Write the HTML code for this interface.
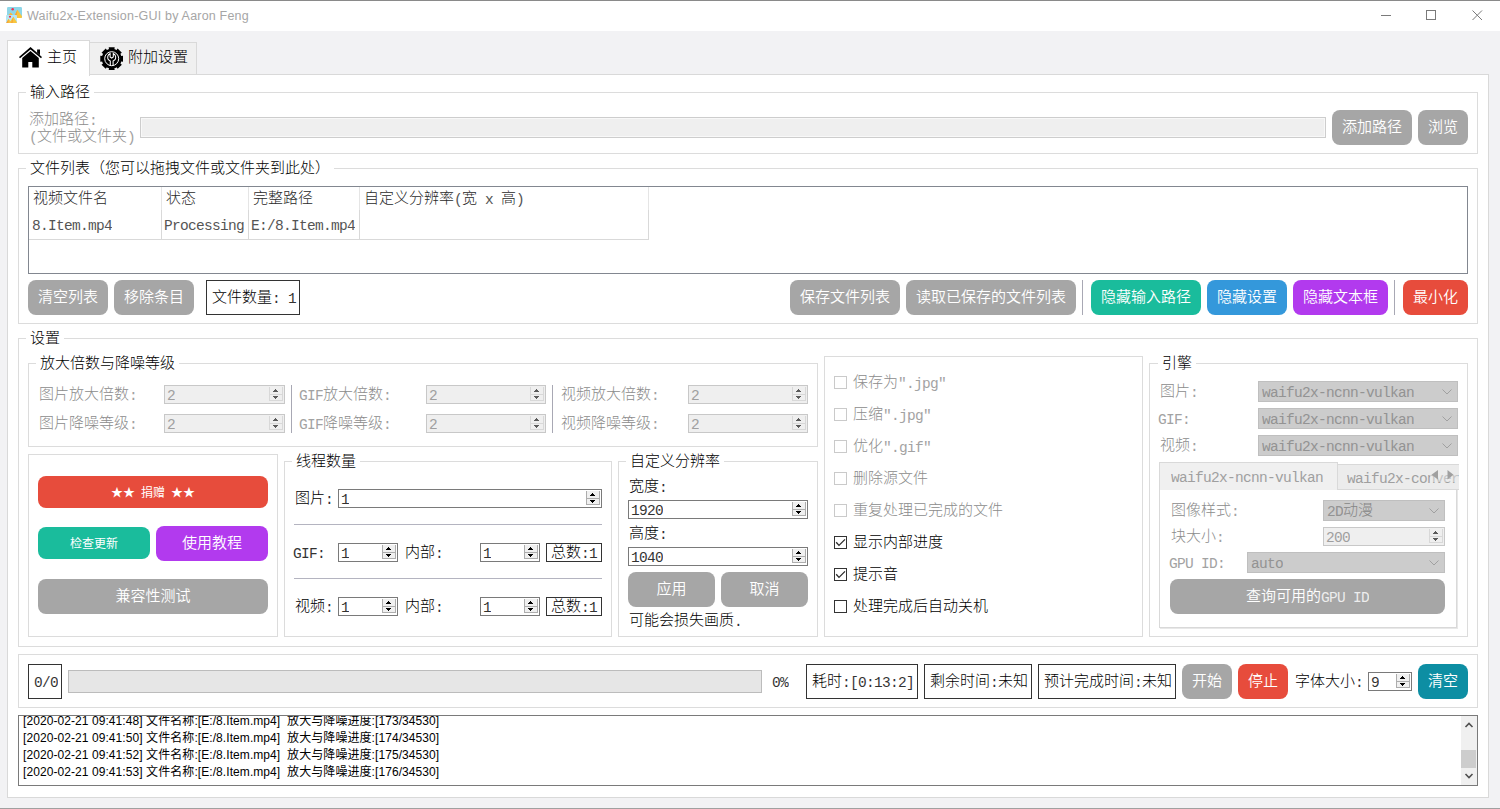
<!DOCTYPE html>
<html lang="zh-CN"><head><meta charset="utf-8"><title>Waifu2x-Extension-GUI by Aaron Feng</title>
<style>
*{box-sizing:border-box;margin:0;padding:0}
html,body{width:1500px;height:809px;overflow:hidden;background:#f2f2f4}
body{position:relative;font-family:"Liberation Sans","Noto Sans CJK SC",sans-serif;font-weight:300;font-size:15px;color:#000}
body>div,body>svg{position:absolute}
.l{font-family:"Liberation Mono","Noto Sans CJK SC",monospace;font-weight:400;font-size:14.5px;letter-spacing:-0.7015px;white-space:pre;opacity:.8;position:relative;top:1px}
.t{white-space:nowrap;line-height:15px;height:15px}
.g{color:#8c8c8c}
.d3{color:#2a2a2a}
.w{color:#fff}
.gb{border:1px solid #dcdcdc;background:#fff}
.gt{background:#fff;height:16px;line-height:15px;padding-left:4px;white-space:nowrap}
.btn{border-radius:8px;color:#fff;text-align:center;white-space:nowrap;font-weight:350}
.s12{font-size:12px;font-weight:400}
.s12 .l{font-size:12px;letter-spacing:-1.2px}
.sp{border:1px solid #7a7a7a;background:#fff}
.sp .sv{position:absolute;left:2px;top:0px;line-height:15px}
.sp .sb{position:absolute;right:1px;top:1px;width:14px;bottom:2px;background:#f0f0f0;border:1px solid #adadad;border-top:none}
.sp .sb:after{content:"";position:absolute;left:0;right:0;top:7px;height:1px;background:#adadad}
.sp i{position:absolute;left:3px;width:5px;height:3px;color:#000}
.sp i.up{top:2px;background:linear-gradient(currentColor,currentColor) 2px 0/1px 1px no-repeat,linear-gradient(currentColor,currentColor) 1px 1px/3px 1px no-repeat,linear-gradient(currentColor,currentColor) 0 2px/5px 1px no-repeat}
.sp i.dn{bottom:1px;background:linear-gradient(currentColor,currentColor) 2px 2px/1px 1px no-repeat,linear-gradient(currentColor,currentColor) 1px 1px/3px 1px no-repeat,linear-gradient(currentColor,currentColor) 0 0/5px 1px no-repeat}
.sp.dis{border-color:#c8c8c8;background:#efefef;color:#8c8c8c}
.sp.dis .sb{background:#efefef;border-color:#d8d8d8}
.sp.dis .sb:after{background:#d8d8d8}
.sp.dis i{color:#5a5a5a}
.cb{border:1px solid #bfbfbf;background:#cccccc;color:#858585}
.cb .cv{position:absolute;left:3px;top:1px;line-height:15px;white-space:nowrap}
.cb .chev{position:absolute;right:5px;top:7px}
.lb{border:1px solid #333;background:#fff}
.ck{width:13px;height:13px;border:1px solid #333;background:#fff}
.ck.dis{border-color:#cacaca}
.vl{background:#a8a8b4;width:1px}
.hl{background:#b4b4c0;height:1px}
.log{font-family:"Liberation Sans","Noto Sans CJK SC",sans-serif;font-weight:400;font-size:12px;line-height:17px;white-space:pre;color:#000;letter-spacing:0.075px}
</style></head><body>

<div class="" style="left:0px;top:0px;width:1500px;height:1px;background:#8a8a8a"></div>
<div class="" style="left:0px;top:1px;width:1500px;height:30px;background:#fff"></div>
<svg style="left:6px;top:6px" width="17" height="18" viewBox="0 0 17 18">
<rect x="1" y="1" width="15" height="11" rx="1.2" fill="#8dd6e8"/>
<path d="M7.5 12 L11.4 3.8 L16 10.2 V11 Q16 12 15 12 Z" fill="#f8c63e"/>
<path d="M7.5 12 L11.4 3.8 L10.6 12 Z" fill="#f5a33a"/>
<path d="M2.6 9 L4.7 6.4 L7 9 Z" fill="#f8b83c"/>
<circle cx="6.7" cy="3.2" r="1.25" fill="#f0304e"/>
<rect x="0" y="9" width="11" height="8" rx="0.8" fill="#b6e6f3"/>
<path d="M0.3 17 L2.6 12.8 L4.4 15.2 L7.3 10.8 L10.8 16 V17 Z" fill="#f8c63e"/>
<path d="M0.3 17 L2.6 12.8 L2.4 17 Z M5 17 L7.3 10.8 L6.6 17 Z" fill="#f5a33a"/>
<circle cx="4" cy="10.8" r="1.05" fill="#f0304e"/>
</svg>
<div style="left:27px;top:8px;font-family:'Liberation Sans',sans-serif;font-size:12.5px;line-height:16px;color:#a6a6a6;font-weight:400;white-space:nowrap;letter-spacing:0.2px">Waifu2x-Extension-GUI by Aaron Feng</div>
<svg style="left:1375px;top:5px" width="115" height="22" viewBox="0 0 115 22">
<path d="M6 10.5 H16" stroke="#7a7a7a" stroke-width="1"/>
<rect x="51.5" y="5.5" width="9" height="9" fill="none" stroke="#7a7a7a" stroke-width="1"/>
<path d="M97.5 5.5 L107 15 M107 5.5 L97.5 15" stroke="#7a7a7a" stroke-width="1"/>
</svg>
<div class="" style="left:7px;top:74px;width:1482px;height:724px;background:#fff;border:1px solid #d9d9d9"></div>
<div class="" style="left:89px;top:42px;width:108px;height:33px;background:#f0f0f0;border:1px solid #d9d9d9"></div>
<div class="" style="left:7px;top:40px;width:83px;height:36px;background:#fff;border:1px solid #d9d9d9;border-bottom:none"></div>
<svg style="left:19px;top:47px" width="23" height="21" viewBox="0 0 23 21">
<path d="M11.5 0.1 L0 9.9 L1 11.2 L11.5 2.5 L22 11.2 L23 9.9 Z" fill="#000"/>
<path d="M18.1 2.5 H21 V8.2 L18.1 5.7 Z" fill="#000"/>
<path d="M11.5 3.9 L3.2 10.9 V20.6 H9.3 V15 H13.3 V20.6 H19.8 V10.9 Z" fill="#000"/>
</svg>
<div class="t " style="left:47px;top:49px;">主页</div>
<svg style="left:99.8px;top:46.8px" width="23.4" height="23.4" viewBox="0 0 23.4 23.4">
<path d="M9.00 2.49 L8.72 0.28 L14.68 0.28 L14.40 2.49 L16.31 3.28 L17.67 1.52 L21.88 5.73 L20.12 7.09 L20.91 9.00 L23.12 8.72 L23.12 14.68 L20.91 14.40 L20.12 16.31 L21.88 17.67 L17.67 21.88 L16.31 20.12 L14.40 20.91 L14.68 23.12 L8.72 23.12 L9.00 20.91 L7.09 20.12 L5.73 21.88 L1.52 17.67 L3.28 16.31 L2.49 14.40 L0.28 14.68 L0.28 8.72 L2.49 9.00 L3.28 7.09 L1.52 5.73 L5.73 1.52 L7.09 3.28 Z" fill="#000"/>
<circle cx="11.7" cy="11.7" r="9.9" fill="#000"/>
<circle cx="11.7" cy="11.7" r="7" fill="none" stroke="#fff" stroke-width="1"/>
<path d="M10.3 18.4 V14 C8.4 13.2 7.4 11.4 7.8 9.4 C8.1 8 9 7 10.1 6.6 V9.9 L11.7 11.1 L13.3 9.9 V6.6 C14.4 7 15.3 8 15.6 9.4 C16 11.4 15 13.2 13.1 14 V18.4" fill="none" stroke="#fff" stroke-width="1.05"/>
</svg>
<div class="t " style="left:128px;top:49px;">附加设置</div>
<div class="gb" style="left:18px;top:92px;width:1460px;height:62px;"></div>
<div class="gt" style="left:26px;top:84px;width:68px">输入路径</div>
<div class="t g" style="left:29px;top:111px;">添加路径<span class="l">:</span></div>
<div class="t g" style="left:29px;top:128px;"><span class="l">(</span>文件或文件夹<span class="l">)</span></div>
<div class="" style="left:140px;top:117px;width:1186px;height:21px;background:#efefef;border:1px solid #cdcdcd;box-shadow:inset 0 0 0 1px #f8f8f8"></div>
<div class="btn " style="left:1332px;top:110px;width:80px;height:35px;line-height:33px;background:#a6a6a6;">添加路径</div>
<div class="btn " style="left:1418px;top:110px;width:50px;height:35px;line-height:33px;background:#a6a6a6;">浏览</div>
<div class="gb" style="left:18px;top:168px;width:1460px;height:156px;"></div>
<div class="gt" style="left:26px;top:160px;width:308px">文件列表（您可以拖拽文件或文件夹到此处）</div>
<div class="" style="left:28px;top:186px;width:1440px;height:88px;background:#fff;border:1px solid #828790"></div>
<div class="" style="left:161px;top:187px;width:1px;height:23px;background:#e5e5e5"></div>
<div class="" style="left:161px;top:210px;width:1px;height:30px;background:#d9d9d9"></div>
<div class="" style="left:248px;top:187px;width:1px;height:23px;background:#e5e5e5"></div>
<div class="" style="left:248px;top:210px;width:1px;height:30px;background:#d9d9d9"></div>
<div class="" style="left:359px;top:187px;width:1px;height:23px;background:#e5e5e5"></div>
<div class="" style="left:359px;top:210px;width:1px;height:30px;background:#d9d9d9"></div>
<div class="" style="left:648px;top:187px;width:1px;height:23px;background:#e5e5e5"></div>
<div class="" style="left:648px;top:210px;width:1px;height:30px;background:#d9d9d9"></div>
<div class="" style="left:29px;top:239px;width:620px;height:1px;background:#d9d9d9"></div>
<div class="t d3" style="left:33px;top:190px;">视频文件名</div>
<div class="t d3" style="left:166px;top:190px;">状态</div>
<div class="t d3" style="left:253px;top:190px;">完整路径</div>
<div class="t d3" style="left:364px;top:190px;">自定义分辨率<span class="l">(</span>宽<span class="l"> x </span>高<span class="l">)</span></div>
<div class="t d3" style="left:32px;top:216px;"><span class="l">8.Item.mp4</span></div>
<div class="t d3" style="left:164px;top:216px;"><span class="l">Processing</span></div>
<div class="t d3" style="left:251px;top:216px;"><span class="l">E:/8.Item.mp4</span></div>
<div class="btn " style="left:28px;top:280px;width:80px;height:35px;line-height:33px;background:#a6a6a6;">清空列表</div>
<div class="btn " style="left:114px;top:280px;width:80px;height:35px;line-height:33px;background:#a6a6a6;">移除条目</div>
<div class="lb" style="left:206px;top:280px;width:94px;height:35px;"></div>
<div class="t " style="left:212px;top:289px;">文件数量<span class="l">: 1</span></div>
<div class="btn " style="left:790px;top:280px;width:110px;height:35px;line-height:33px;background:#a6a6a6;">保存文件列表</div>
<div class="btn " style="left:906px;top:280px;width:170px;height:35px;line-height:33px;background:#a6a6a6;">读取已保存的文件列表</div>
<div class="vl" style="left:1082px;top:280px;width:1px;height:35px;"></div>
<div class="btn " style="left:1091px;top:280px;width:110px;height:35px;line-height:33px;background:#1abc9c;">隐藏输入路径</div>
<div class="btn " style="left:1207px;top:280px;width:80px;height:35px;line-height:33px;background:#3498db;">隐藏设置</div>
<div class="btn " style="left:1293px;top:280px;width:95px;height:35px;line-height:33px;background:#b23aee;">隐藏文本框</div>
<div class="vl" style="left:1394px;top:280px;width:1px;height:35px;"></div>
<div class="btn " style="left:1403px;top:280px;width:65px;height:35px;line-height:33px;background:#e74c3c;">最小化</div>
<div class="gb" style="left:18px;top:338px;width:1460px;height:309px;"></div>
<div class="gt" style="left:26px;top:330px;width:38px">设置</div>
<div class="gb" style="left:28px;top:363px;width:790px;height:84px;"></div>
<div class="gt" style="left:36px;top:355px;width:143px">放大倍数与降噪等级</div>
<div class="t g" style="left:39px;top:386px;">图片放大倍数<span class="l">:</span></div>
<div class="t g" style="left:39px;top:415px;">图片降噪等级<span class="l">:</span></div>
<div class="sp dis" style="left:164px;top:385px;width:121px;height:19px"><span class="sv"><span class="l">2</span></span><span class="sb"><i class="up"></i><i class="dn"></i></span></div>
<div class="sp dis" style="left:164px;top:414px;width:121px;height:19px"><span class="sv"><span class="l">2</span></span><span class="sb"><i class="up"></i><i class="dn"></i></span></div>
<div class="vl" style="left:291px;top:385px;width:1px;height:48px;"></div>
<div class="t g" style="left:299px;top:386px;"><span class="l">GIF</span>放大倍数<span class="l">:</span></div>
<div class="t g" style="left:299px;top:415px;"><span class="l">GIF</span>降噪等级<span class="l">:</span></div>
<div class="sp dis" style="left:426px;top:385px;width:120px;height:19px"><span class="sv"><span class="l">2</span></span><span class="sb"><i class="up"></i><i class="dn"></i></span></div>
<div class="sp dis" style="left:426px;top:414px;width:120px;height:19px"><span class="sv"><span class="l">2</span></span><span class="sb"><i class="up"></i><i class="dn"></i></span></div>
<div class="vl" style="left:552px;top:385px;width:1px;height:48px;"></div>
<div class="t g" style="left:561px;top:386px;">视频放大倍数<span class="l">:</span></div>
<div class="t g" style="left:561px;top:415px;">视频降噪等级<span class="l">:</span></div>
<div class="sp dis" style="left:688px;top:385px;width:120px;height:19px"><span class="sv"><span class="l">2</span></span><span class="sb"><i class="up"></i><i class="dn"></i></span></div>
<div class="sp dis" style="left:688px;top:414px;width:120px;height:19px"><span class="sv"><span class="l">2</span></span><span class="sb"><i class="up"></i><i class="dn"></i></span></div>
<div class="gb" style="left:28px;top:454px;width:250px;height:183px;"></div>
<div class="btn s12" style="left:38px;top:476px;width:230px;height:32px;line-height:34px;background:#e74c3c;">★★<span class="l"> </span>捐赠<span class="l"> </span>★★</div>
<div class="btn s12" style="left:38px;top:527px;width:112px;height:32px;line-height:34px;background:#1abc9c;">检查更新</div>
<div class="btn " style="left:156px;top:526px;width:112px;height:35px;line-height:33px;background:#b23aee;">使用教程</div>
<div class="btn " style="left:38px;top:579px;width:230px;height:35px;line-height:33px;background:#a6a6a6;">兼容性测试</div>
<div class="gb" style="left:284px;top:461px;width:328px;height:176px;"></div>
<div class="gt" style="left:292px;top:453px;width:68px">线程数量</div>
<div class="t " style="left:295px;top:490px;">图片<span class="l">:</span></div>
<div class="sp" style="left:338px;top:489px;width:264px;height:19px"><span class="sv"><span class="l">1</span></span><span class="sb"><i class="up"></i><i class="dn"></i></span></div>
<div class="hl" style="left:294px;top:524px;width:308px;height:1px;"></div>
<div class="t " style="left:293px;top:544px;"><span class="l">GIF:</span></div>
<div class="sp" style="left:338px;top:543px;width:60px;height:19px"><span class="sv"><span class="l">1</span></span><span class="sb"><i class="up"></i><i class="dn"></i></span></div>
<div class="t " style="left:405px;top:544px;">内部<span class="l">:</span></div>
<div class="sp" style="left:480px;top:543px;width:60px;height:19px"><span class="sv"><span class="l">1</span></span><span class="sb"><i class="up"></i><i class="dn"></i></span></div>
<div class="lb" style="left:546px;top:543px;width:56px;height:19px;"></div>
<div class="t " style="left:551px;top:544px;">总数<span class="l">:1</span></div>
<div class="hl" style="left:294px;top:578px;width:308px;height:1px;"></div>
<div class="t " style="left:295px;top:598px;">视频<span class="l">:</span></div>
<div class="sp" style="left:338px;top:597px;width:60px;height:19px"><span class="sv"><span class="l">1</span></span><span class="sb"><i class="up"></i><i class="dn"></i></span></div>
<div class="t " style="left:405px;top:598px;">内部<span class="l">:</span></div>
<div class="sp" style="left:480px;top:597px;width:60px;height:19px"><span class="sv"><span class="l">1</span></span><span class="sb"><i class="up"></i><i class="dn"></i></span></div>
<div class="lb" style="left:546px;top:597px;width:56px;height:19px;"></div>
<div class="t " style="left:551px;top:598px;">总数<span class="l">:1</span></div>
<div class="gb" style="left:618px;top:461px;width:200px;height:176px;"></div>
<div class="gt" style="left:626px;top:453px;width:98px">自定义分辨率</div>
<div class="t " style="left:629px;top:478px;">宽度<span class="l">:</span></div>
<div class="sp" style="left:628px;top:500px;width:180px;height:19px"><span class="sv"><span class="l">1920</span></span><span class="sb"><i class="up"></i><i class="dn"></i></span></div>
<div class="t " style="left:629px;top:525px;">高度<span class="l">:</span></div>
<div class="sp" style="left:628px;top:547px;width:180px;height:19px"><span class="sv"><span class="l">1040</span></span><span class="sb"><i class="up"></i><i class="dn"></i></span></div>
<div class="btn " style="left:628px;top:572px;width:87px;height:35px;line-height:33px;background:#a6a6a6;">应用</div>
<div class="btn " style="left:721px;top:572px;width:87px;height:35px;line-height:33px;background:#a6a6a6;">取消</div>
<div class="t " style="left:629px;top:612px;">可能会损失画质<span class="l">.</span></div>
<div class="gb" style="left:824px;top:356px;width:319px;height:281px;"></div>
<div class="ck dis" style="left:834px;top:376px"></div>
<div class="t g" style="left:853px;top:374px;">保存为<span class="l">".jpg"</span></div>
<div class="ck dis" style="left:834px;top:408px"></div>
<div class="t g" style="left:853px;top:406px;">压缩<span class="l">".jpg"</span></div>
<div class="ck dis" style="left:834px;top:440px"></div>
<div class="t g" style="left:853px;top:438px;">优化<span class="l">".gif"</span></div>
<div class="ck dis" style="left:834px;top:472px"></div>
<div class="t g" style="left:853px;top:470px;">删除源文件</div>
<div class="ck dis" style="left:834px;top:504px"></div>
<div class="t g" style="left:853px;top:502px;">重复处理已完成的文件</div>
<div class="ck on" style="left:834px;top:536px"><svg width="13" height="13" viewBox="0 0 13 13" style="position:absolute;left:-1px;top:-1px"><path d="M2.2 6.2 L5 9.4 L11 3.4" fill="none" stroke="#2a2a2a" stroke-width="1.3"/></svg></div>
<div class="t " style="left:853px;top:534px;">显示内部进度</div>
<div class="ck on" style="left:834px;top:568px"><svg width="13" height="13" viewBox="0 0 13 13" style="position:absolute;left:-1px;top:-1px"><path d="M2.2 6.2 L5 9.4 L11 3.4" fill="none" stroke="#2a2a2a" stroke-width="1.3"/></svg></div>
<div class="t " style="left:853px;top:566px;">提示音</div>
<div class="ck" style="left:834px;top:600px"></div>
<div class="t " style="left:853px;top:598px;">处理完成后自动关机</div>
<div class="gb" style="left:1149px;top:363px;width:319px;height:274px;"></div>
<div class="gt" style="left:1158px;top:355px;width:38px">引擎</div>
<div class="t g" style="left:1160px;top:383px;">图片<span class="l">:</span></div>
<div class="t g" style="left:1158px;top:410px;"><span class="l">GIF:</span></div>
<div class="t g" style="left:1160px;top:437px;">视频<span class="l">:</span></div>
<div class="cb" style="left:1258px;top:381px;width:200px;height:21px"><span class="cv"><span class="l">waifu2x-ncnn-vulkan</span></span><svg class="chev" width="10" height="6" viewBox="0 0 10 6"><path d="M0.5 0.5 L5 5 L9.5 0.5" fill="none" stroke="#a0a0a0" stroke-width="1"/></svg></div>
<div class="cb" style="left:1258px;top:408px;width:200px;height:21px"><span class="cv"><span class="l">waifu2x-ncnn-vulkan</span></span><svg class="chev" width="10" height="6" viewBox="0 0 10 6"><path d="M0.5 0.5 L5 5 L9.5 0.5" fill="none" stroke="#a0a0a0" stroke-width="1"/></svg></div>
<div class="cb" style="left:1258px;top:435px;width:200px;height:21px"><span class="cv"><span class="l">waifu2x-ncnn-vulkan</span></span><svg class="chev" width="10" height="6" viewBox="0 0 10 6"><path d="M0.5 0.5 L5 5 L9.5 0.5" fill="none" stroke="#a0a0a0" stroke-width="1"/></svg></div>
<div class="" style="left:1159px;top:489px;width:298px;height:139px;background:#fff;border:1px solid #d9d9d9;box-shadow:1px 1px 0 #e8e8e8"></div>
<div class="" style="left:1337px;top:464px;width:122px;height:26px;background:#ececec;border:1px solid #d9d9d9;border-right:none;overflow:hidden"><div class="t g" style="position:absolute;left:9px;top:4px"><span class="l">waifu2x-converter</span></div></div>
<div class="" style="left:1159px;top:462px;width:179px;height:28px;background:#f0f0f0;border:1px solid #d9d9d9;border-bottom:none"></div>
<div class="t g" style="left:1171px;top:468px;"><span class="l">waifu2x-ncnn-vulkan</span></div>
<svg style="left:1430px;top:468px" width="28" height="14" viewBox="0 0 28 14">
<rect x="0" y="0" width="28" height="14" fill="#ececec" fill-opacity="0.5"/>
<path d="M8 2 L8 11.5 L1.5 6.8 Z" fill="#a0a0a0"/><path d="M17.5 2 L17.5 11.5 L23.5 6.8 Z" fill="#a0a0a0"/></svg>
<div class="t g" style="left:1171px;top:502px;">图像样式<span class="l">:</span></div>
<div class="cb" style="left:1323px;top:500px;width:122px;height:21px"><span class="cv"><span class="l">2D</span>动漫</span><svg class="chev" width="10" height="6" viewBox="0 0 10 6"><path d="M0.5 0.5 L5 5 L9.5 0.5" fill="none" stroke="#a0a0a0" stroke-width="1"/></svg></div>
<div class="t g" style="left:1171px;top:528px;">块大小<span class="l">:</span></div>
<div class="sp dis" style="left:1323px;top:527px;width:122px;height:19px"><span class="sv"><span class="l">200</span></span><span class="sb"><i class="up"></i><i class="dn"></i></span></div>
<div class="t g" style="left:1169px;top:554px;"><span class="l">GPU ID:</span></div>
<div class="cb" style="left:1247px;top:552px;width:198px;height:21px"><span class="cv"><span class="l">auto</span></span><svg class="chev" width="10" height="6" viewBox="0 0 10 6"><path d="M0.5 0.5 L5 5 L9.5 0.5" fill="none" stroke="#a0a0a0" stroke-width="1"/></svg></div>
<div class="btn " style="left:1170px;top:579px;width:275px;height:35px;line-height:33px;background:#a6a6a6;">查询可用的<span class="l">GPU ID</span></div>
<div class="gb" style="left:18px;top:654px;width:1460px;height:54px;"></div>
<div class="lb" style="left:28px;top:664px;width:34px;height:35px;"></div>
<div class="t " style="left:34px;top:673px;"><span class="l">0/0</span></div>
<div class="" style="left:68px;top:670px;width:694px;height:23px;background:#e6e6e6;border:1px solid #bcbcbc"></div>
<div class="t " style="left:772px;top:673px;"><span class="l">0%</span></div>
<div class="lb" style="left:806px;top:664px;width:112px;height:35px;"></div>
<div class="t " style="left:812px;top:673px;">耗时<span class="l">:[0:13:2]</span></div>
<div class="lb" style="left:924px;top:664px;width:108px;height:35px;"></div>
<div class="t " style="left:930px;top:673px;">剩余时间<span class="l">:</span>未知</div>
<div class="lb" style="left:1038px;top:664px;width:138px;height:35px;"></div>
<div class="t " style="left:1044px;top:673px;">预计完成时间<span class="l">:</span>未知</div>
<div class="btn " style="left:1182px;top:664px;width:50px;height:35px;line-height:33px;background:#a6a6a6;">开始</div>
<div class="btn " style="left:1238px;top:664px;width:50px;height:35px;line-height:33px;background:#e74c3c;">停止</div>
<div class="t " style="left:1295px;top:673px;">字体大小<span class="l">:</span></div>
<div class="sp" style="left:1368px;top:672px;width:44px;height:19px"><span class="sv"><span class="l">9</span></span><span class="sb"><i class="up"></i><i class="dn"></i></span></div>
<div class="btn " style="left:1418px;top:664px;width:50px;height:35px;line-height:33px;background:#0d8ea3;">清空</div>
<div class="" style="left:18px;top:715px;width:1460px;height:71px;background:#fff;border:1px solid #7a7a7a;overflow:hidden"><div class="log" style="position:absolute;left:4px;top:-3px">[2020-02-21 09:41:48] 文件名称:[E:/8.Item.mp4]  放大与降噪进度:[173/34530]
[2020-02-21 09:41:50] 文件名称:[E:/8.Item.mp4]  放大与降噪进度:[174/34530]
[2020-02-21 09:41:52] 文件名称:[E:/8.Item.mp4]  放大与降噪进度:[175/34530]
[2020-02-21 09:41:53] 文件名称:[E:/8.Item.mp4]  放大与降噪进度:[176/34530]</div><div style="position:absolute;right:0;top:0;width:16px;height:69px;background:#f0f0f0"><svg width="16" height="69" viewBox="0 0 16 69" style="position:absolute;left:0;top:0"><path d="M4.5 11 L8 7.5 L11.5 11" fill="none" stroke="#505050" stroke-width="1.6"/><rect x="0" y="34" width="15" height="18" fill="#cdcdcd"/><path d="M4.5 58 L8 61.5 L11.5 58" fill="none" stroke="#505050" stroke-width="1.6"/></svg></div></div>
<div class="" style="left:0px;top:808px;width:1500px;height:1px;background:#a0a0a0"></div>
</body></html>
